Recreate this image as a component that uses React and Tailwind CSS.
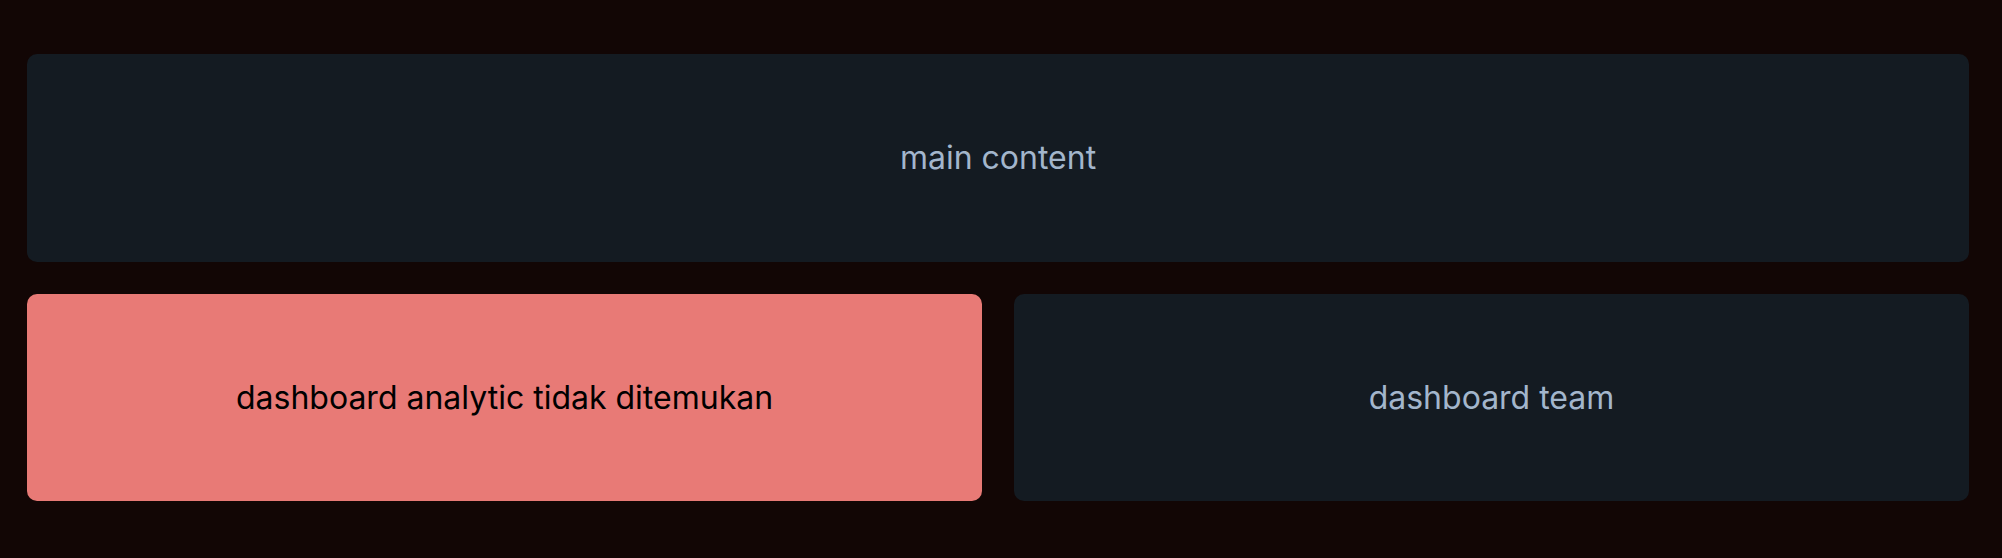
export default function App() {
  return (
    <div
      className="min-h-screen bg-[#120605] pl-[27px] pr-[33px] pt-[54px] pb-[57px]"
      style={{ fontFamily: 'Inter, "Noto Sans", sans-serif' }}
    >
      <div className="flex flex-col gap-[32px]">
        {/* main content */}
        <div className="h-[208px] rounded-[10px] bg-[#141b22] flex items-center justify-center text-[32px] text-[#a3b6cc]">
          main content
        </div>

        <div className="grid grid-cols-2 gap-[32px]">
          <div className="h-[207px] rounded-[10px] bg-[#e87a76] flex items-center justify-center text-[32px] text-black">
            dashboard analytic tidak ditemukan
          </div>
          <div className="h-[207px] rounded-[10px] bg-[#141b22] flex items-center justify-center text-[32px] text-[#a3b6cc]">
            dashboard team
          </div>
        </div>
      </div>
    </div>
  );
}
